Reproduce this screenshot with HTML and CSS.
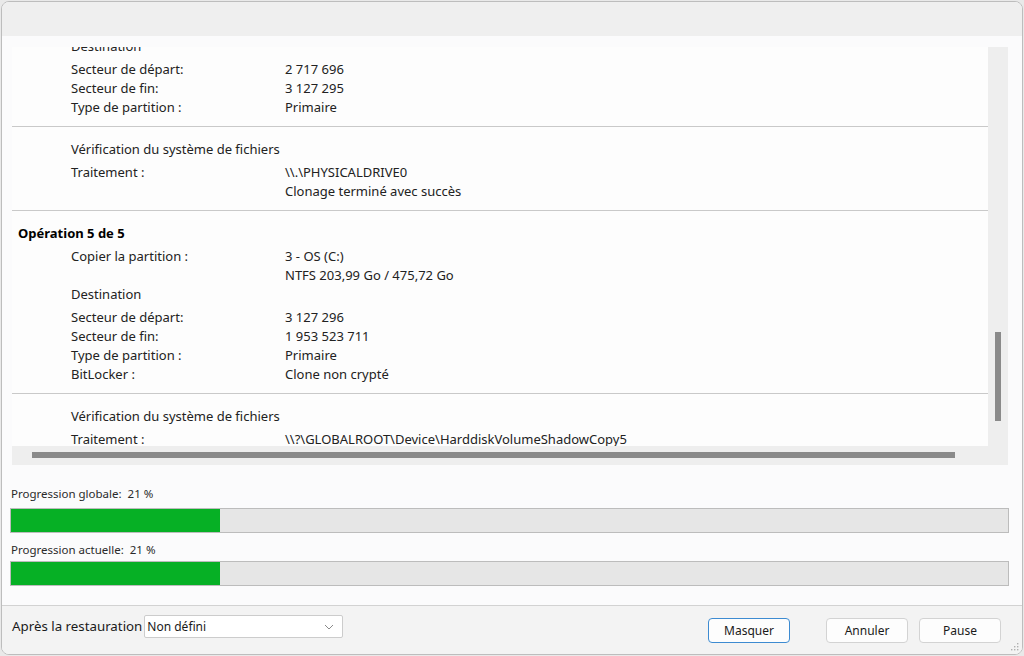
FILE: index.html
```html
<!DOCTYPE html>
<html lang="fr">
<head>
    <meta charset="UTF-8">
    <title>Restauration</title>
    <link rel="stylesheet" href="styles.css">
</head>
<body>
    <div class="window">
        <div class="titlebar"></div>

        <div class="main">
            <div class="listbox">
                <div class="viewport">
                    <div class="group first">
                        <div class="row head sub">Destination</div>
                        <div class="row"><span class="label">Secteur de départ:</span><span>2 717 696</span></div>
                        <div class="row"><span class="label">Secteur de fin:</span><span>3 127 295</span></div>
                        <div class="row"><span class="label">Type de partition :</span><span>Primaire</span></div>
                    </div>
                    <div class="group">
                        <div class="row head sub">Vérification du système de fichiers</div>
                        <div class="row"><span class="label">Traitement :</span><span>\\.\PHYSICALDRIVE0</span></div>
                        <div class="row"><span class="label"></span><span>Clonage terminé avec succès</span></div>
                    </div>
                    <div class="group">
                        <div class="row head op">Opération 5 de 5</div>
                        <div class="row"><span class="label">Copier la partition :</span><span>3 - OS (C:)</span></div>
                        <div class="row"><span class="label"></span><span>NTFS 203,99 Go / 475,72 Go</span></div>
                        <div class="row head sub">Destination</div>
                        <div class="row"><span class="label">Secteur de départ:</span><span>3 127 296</span></div>
                        <div class="row"><span class="label">Secteur de fin:</span><span>1 953 523 711</span></div>
                        <div class="row"><span class="label">Type de partition :</span><span>Primaire</span></div>
                        <div class="row"><span class="label">BitLocker :</span><span>Clone non crypté</span></div>
                    </div>
                    <div class="group">
                        <div class="row head sub">Vérification du système de fichiers</div>
                        <div class="row"><span class="label">Traitement :</span><span>\\?\GLOBALROOT\Device\HarddiskVolumeShadowCopy5</span></div>
                    </div>
                </div>
                <div class="vscroll"><div class="vthumb"></div></div>
                <div class="hscroll"><div class="hthumb"></div></div>
            </div>

            <div class="progress">
                <div class="plabel first">Progression globale:&nbsp; 21 %</div>
                <div class="bar"><div class="fill" style="width: 21%"></div></div>
                <div class="plabel">Progression actuelle:&nbsp; 21 %</div>
                <div class="bar"><div class="fill" style="width: 21%"></div></div>
            </div>
        </div>

        <div class="footer">
            <span class="after">Après la restauration</span>
            <div class="select">
                <span>Non défini</span>
                <svg width="10" height="6" viewBox="0 0 10 6"><path d="M1 1l4 4 4-4" fill="none" stroke="#8a8a8a" stroke-width="1"/></svg>
            </div>
            <button class="button focused">Masquer</button>
            <button class="button cancel">Annuler</button>
            <button class="button">Pause</button>
            <svg class="grip" width="8" height="8" viewBox="0 0 8 8">
                <rect x="6" y="0" width="1.4" height="1.4" fill="#b0b0b0"/>
                <rect x="3" y="3" width="1.4" height="1.4" fill="#b0b0b0"/>
                <rect x="6" y="3" width="1.4" height="1.4" fill="#b0b0b0"/>
                <rect x="0" y="6" width="1.4" height="1.4" fill="#b0b0b0"/>
                <rect x="3" y="6" width="1.4" height="1.4" fill="#b0b0b0"/>
                <rect x="6" y="6" width="1.4" height="1.4" fill="#b0b0b0"/>
            </svg>
        </div>
    </div>
</body>
</html>
```

FILE: styles.css
```css
* {
    box-sizing: border-box;
}
body {
    margin: 0;
    background: #e9e9e9;
    font-family: "Noto Sans", "Open Sans", sans-serif;
    color: #1a1a1a;
}
.window {
    margin: 1px 0 0 1px;
    width: 1022px;
    height: 654px;
    border: 1px solid #bdbdbd;
    border-radius: 8px;
    overflow: hidden;
    display: flex;
    flex-direction: column;
    background: #fbfbfc;
}
.titlebar {
    height: 34px;
    background: #efefef;
}
.main {
    flex: 1;
    padding: 11px 14px 0 10px;
}
.listbox {
    position: relative;
    height: 418px;
    background: #eeeeee;
}
.viewport {
    position: absolute;
    left: 0;
    top: 0;
    width: 976px;
    height: 399px;
    overflow: hidden;
    background: #fdfdfd;
    font-size: 13px;
    color: #222;
}
.group {
    padding: 13px 0 9px;
    border-bottom: 1px solid #c9c9c9;
}
.group.first {
    margin-top: -10px;
    padding-top: 0;
}
.row {
    height: 19px;
    line-height: 19px;
    padding-left: 59px;
    display: flex;
    white-space: nowrap;
}
.row .label {
    width: 214px;
}
.row.head {
    margin-bottom: 4px;
}
.row.op {
    padding-left: 6px;
    font-weight: bold;
    color: #000;
}
.vscroll {
    position: absolute;
    right: 0;
    top: 0;
    width: 19px;
    height: 399px;
}
.vthumb {
    position: absolute;
    left: 6px;
    top: 285px;
    width: 6px;
    height: 89px;
    background: #8a8a8a;
}
.hscroll {
    position: absolute;
    left: 0;
    bottom: 0;
    width: 976px;
    height: 19px;
}
.hthumb {
    position: absolute;
    left: 20px;
    top: 6px;
    width: 923px;
    height: 6px;
    background: #8a8a8a;
}
.progress {
    margin-left: -2px;
}
.plabel {
    font-size: 11.5px;
    line-height: 16px;
    color: #2a2a2a;
    padding-left: 1px;
    margin: 9px 0 3px;
}
.plabel.first {
    margin: 21px 0 6px;
}
.bar {
    height: 25px;
    width: 999px;
    border: 1px solid #bcbcbc;
    background: #e6e6e6;
}
.fill {
    height: 100%;
    background: #06b025;
}
.footer {
    height: 49px;
    border-top: 1px solid #d2d2d2;
    background: #f3f3f3;
    display: flex;
    align-items: flex-start;
    padding: 10px 21px 0 10px;
    position: relative;
}
.after {
    font-size: 13.3px;
    line-height: 20px;
    color: #1a1a1a;
    margin-right: 2px;
}
.select {
    margin-top: -1px;
    width: 199px;
    height: 23px;
    border: 1px solid #cccccc;
    border-radius: 2px;
    background: #fff;
    display: flex;
    align-items: center;
    justify-content: space-between;
    padding: 0 8px 0 2px;
    font-size: 12px;
}
.button {
    margin-top: 2px;
    width: 82px;
    height: 25px;
    border: 1px solid #d3d3d3;
    border-radius: 4px;
    background: #fdfdfd;
    font-family: inherit;
    font-size: 12px;
    color: #1a1a1a;
    padding: 0;
}
.button.focused {
    margin-left: auto;
    border-color: #3d8bd1;
}
.button.cancel {
    margin-left: 36px;
    margin-right: 11px;
}
.grip {
    position: absolute;
    right: 3px;
    bottom: 3px;
}
```
